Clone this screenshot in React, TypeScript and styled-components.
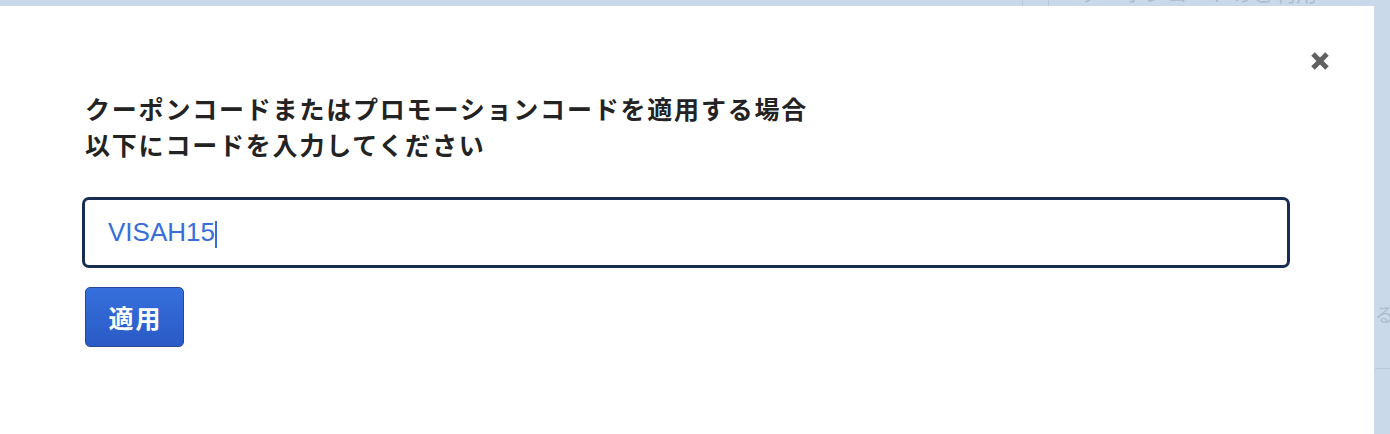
import React from 'react';
import styled, { createGlobalStyle } from 'styled-components';

const GlobalStyle = createGlobalStyle`
  html, body {
    margin: 0;
    padding: 0;
    height: 100%;
    overflow: hidden;
    background: #c9d9e9;
    font-family: 'Noto Sans CJK JP', 'Noto Sans', sans-serif;
  }
`;

// page that sits behind the dimmed backdrop
const BehindPage = styled.div`
  display: grid;
  grid-template-columns: 1374px 1fr;
  height: 434px;
  color: #adbdcf;
`;

const BehindMain = styled.div`
  display: flex;
  flex-direction: column;
`;

const BehindHeader = styled.div`
  display: flex;
  align-items: stretch;
  height: 24px;
  margin-top: -18px;
  padding-left: 1022px;
`;

const Divider = styled.div<{ $gap?: number }>`
  width: 1px;
  margin-right: ${p => p.$gap ?? 0}px;
  background: #b9c9da;
`;

const BehindHeading = styled.div`
  margin-left: 31px;
  font-size: 21px;
  line-height: 21px;
  letter-spacing: 0.6px;
  white-space: nowrap;
  font-weight: 400;
`;

const BehindSide = styled.div`
  display: flex;
  flex-direction: column;
  padding-top: 302px;
  padding-left: 1px;
  overflow: hidden;
`;

const SideText = styled.div`
  font-size: 19px;
  line-height: 24px;
  white-space: nowrap;
  height: 66px;
  border-bottom: 1px solid #b9c9da;
`;

const Modal = styled.div`
  position: fixed;
  top: 6px;
  left: 0;
  width: 1374px;
  bottom: 0;
  background: #ffffff;
  display: flex;
  flex-direction: column;
  box-sizing: border-box;
  padding: 0 84px 0 82px;
`;

const CloseButton = styled.button`
  position: absolute;
  top: 46px;
  right: 45px;
  width: 18px;
  height: 18px;
  padding: 0;
  border: 0;
  background: none;
  cursor: pointer;
  color: #616161;
  display: flex;
`;

const Title = styled.h2`
  margin: 84px 0 0;
  padding-left: 3px;
  font-size: 25px;
  line-height: 36px;
  letter-spacing: 1.8px;
  font-weight: 700;
  color: #232323;
`;

const Field = styled.div`
  margin-top: 35px;
  height: 71px;
  box-sizing: border-box;
  border: 3px solid #172d52;
  border-radius: 7px;
  padding: 0 23px;
  display: flex;
  align-items: center;
  font-family: 'Liberation Sans', Arial, sans-serif;
  font-size: 26px;
  color: #386ed9;
`;

const Caret = styled.span`
  display: inline-block;
  width: 2px;
  height: 27px;
  margin-top: 4px;
  background: #386ed9;
`;

const ApplyButton = styled.button`
  margin: 19px 0 0 3px;
  width: 99px;
  height: 60px;
  box-sizing: border-box;
  border: 1px solid #24499a;
  border-radius: 5px;
  background: linear-gradient(#3670dc, #2a5ac6);
  color: #ffffff;
  font-family: 'Noto Sans CJK JP', sans-serif;
  font-size: 25px;
  font-weight: 700;
  letter-spacing: 2px;
  padding: 0 0 0 2px;
  cursor: pointer;
`;

const CloseIcon = () => (
  <svg width="18" height="18" viewBox="0 0 18 18">
    <path
      d="M2 2 L16 16 M16 2 L2 16"
      stroke="currentColor"
      strokeWidth="5"
      strokeLinecap="butt"
      fill="none"
    />
  </svg>
);

export default function App() {
  return (
    <>
      <GlobalStyle />
      <BehindPage>
        <BehindMain>
          <BehindHeader>
            <Divider $gap={25} />
            <Divider />
            <BehindHeading>クーポンコードのご利用</BehindHeading>
          </BehindHeader>
        </BehindMain>
        <BehindSide>
          <SideText>る</SideText>
        </BehindSide>
      </BehindPage>
      <Modal role="dialog">
        <CloseButton aria-label="閉じる">
          <CloseIcon />
        </CloseButton>
        <Title>
          クーポンコードまたはプロモーションコードを適用する場合
          <br />
          以下にコードを入力してください
        </Title>
        <Field>
          VISAH15
          <Caret />
        </Field>
        <div>
          <ApplyButton>適用</ApplyButton>
        </div>
      </Modal>
    </>
  );
}
